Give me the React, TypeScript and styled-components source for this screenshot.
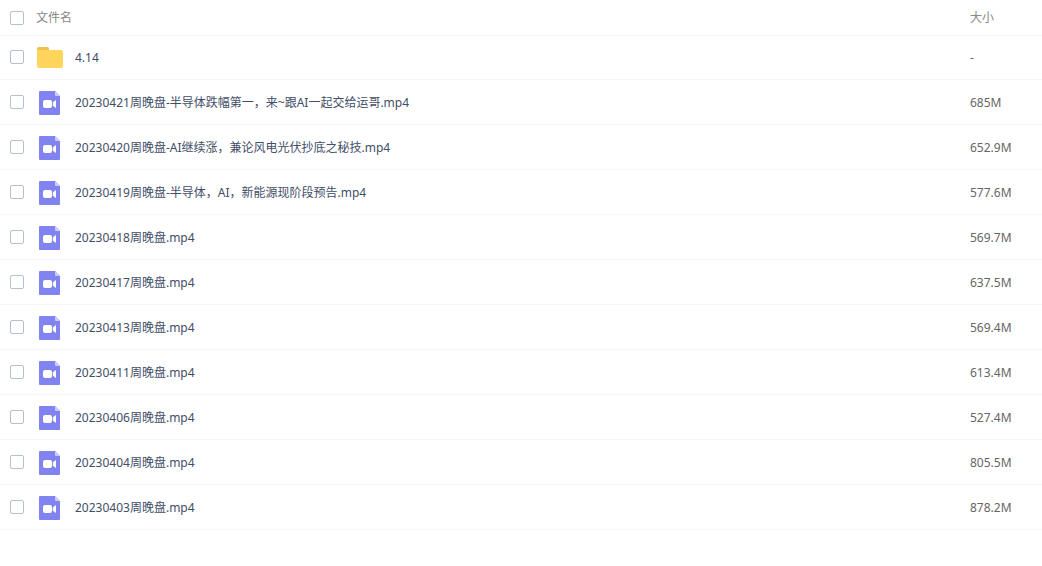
import React from "react";
import styled, { createGlobalStyle } from "styled-components";

const GlobalStyle = createGlobalStyle`
  body {
    margin: 0;
    background: #fff;
    font-family: "Noto Sans", "Noto Sans CJK SC", sans-serif;
    font-size: 12px;
    line-height: 19px;
  }
`;

const FileTable = styled.table`
  width: 100%;
  table-layout: fixed;
  border-collapse: separate;
  border-spacing: 0;
`;

const HeadCell = styled.th<{ $width?: number }>`
  width: ${(p) => (p.$width ? `${p.$width}px` : "auto")};
  height: 35px;
  padding: 0;
  border-bottom: 1px solid #f2f6fd;
  color: #888;
  font-weight: 400;
  text-align: left;
  vertical-align: middle;
`;

const Checkbox = styled.input`
  appearance: none;
  display: block;
  box-sizing: border-box;
  width: 14px;
  height: 14px;
  margin: 0 0 0 10px;
  border: 1px solid #b4c0cf;
  border-radius: 2px;
  background: #fff;
  &:checked {
    background: #06a7ff;
    border-color: #06a7ff;
  }
`;

const Cell = styled.td<{ $folder?: boolean }>`
  height: ${(p) => (p.$folder ? 43 : 44)}px;
  padding: 0;
  border-bottom: 1px solid #f2f6fd;
  color: #666;
  vertical-align: middle;

  ${Checkbox} {
    margin-bottom: 1px;
  }
`;

const NameLink = styled.a`
  display: flex;
  align-items: center;
  gap: 11px;
  color: #424e67;
  text-decoration: none;
  &:hover {
    color: #06a7ff;
  }
`;

const Icon = styled.svg`
  display: block;
  flex: none;
  width: 28px;
  height: 28px;
`;

const FileName = styled.span`
  overflow: hidden;
  text-overflow: ellipsis;
  white-space: nowrap;
`;

const FolderIcon = () => (
  <Icon viewBox="0 0 28 28" aria-hidden="true">
    <path d="M1 10V5a2 2 0 0 1 2-2h8.500a1.500 1.500 0 0 1 1.500 1.500V10z" fill="#eec04c" />
    <path d="M1 6h24a2 2 0 0 1 2 2v14a2 2 0 0 1-2 2H3a2 2 0 0 1-2-2z" fill="#ffd55c" />
  </Icon>
);

const VideoIcon = () => (
  <Icon viewBox="0 0 28 28" aria-hidden="true">
    <path d="M4 3h15l5 5v18a1 1 0 0 1-1 1H4a1 1 0 0 1-1-1V4a1 1 0 0 1 1-1z" fill="#8183f1" />
    <path d="M19 3l5 5h-4a1 1 0 0 1-1-1z" fill="#cbccfb" />
    <rect x="7" y="12" width="9" height="8" rx="2" fill="#fff" />
    <path d="M20 12.600v6.800q0 .6-.6.300L17.300 18q-.5-.5-.5-1v-2q0-.5.500-1l2.100-1.700q.6-.3.600.300z" fill="#fff" />
  </Icon>
);

interface Entry {
  name: string;
  size: string;
  folder?: boolean;
}

const entries: Entry[] = [
  { name: "4.14", size: "-", folder: true },
  { name: "20230421周晚盘-半导体跌幅第一，来~跟AI一起交给运哥.mp4", size: "685M" },
  { name: "20230420周晚盘-AI继续涨，兼论风电光伏抄底之秘技.mp4", size: "652.9M" },
  { name: "20230419周晚盘-半导体，AI，新能源现阶段预告.mp4", size: "577.6M" },
  { name: "20230418周晚盘.mp4", size: "569.7M" },
  { name: "20230417周晚盘.mp4", size: "637.5M" },
  { name: "20230413周晚盘.mp4", size: "569.4M" },
  { name: "20230411周晚盘.mp4", size: "613.4M" },
  { name: "20230406周晚盘.mp4", size: "527.4M" },
  { name: "20230404周晚盘.mp4", size: "805.5M" },
  { name: "20230403周晚盘.mp4", size: "878.2M" },
];

export default function App() {
  return (
    <>
      <GlobalStyle />
      <FileTable lang="zh-CN">
        <thead>
          <tr>
            <HeadCell $width={36}>
              <Checkbox type="checkbox" aria-label="全选" />
            </HeadCell>
            <HeadCell scope="col">文件名</HeadCell>
            <HeadCell scope="col" $width={72}>大小</HeadCell>
          </tr>
        </thead>
        <tbody>
          {entries.map((e) => (
            <tr key={e.name}>
              <Cell $folder={e.folder}>
                <Checkbox type="checkbox" aria-label={e.name} />
              </Cell>
              <Cell $folder={e.folder}>
                <NameLink href="#">
                  {e.folder ? <FolderIcon /> : <VideoIcon />}
                  <FileName>{e.name}</FileName>
                </NameLink>
              </Cell>
              <Cell $folder={e.folder}>{e.size}</Cell>
            </tr>
          ))}
        </tbody>
      </FileTable>
    </>
  );
}
